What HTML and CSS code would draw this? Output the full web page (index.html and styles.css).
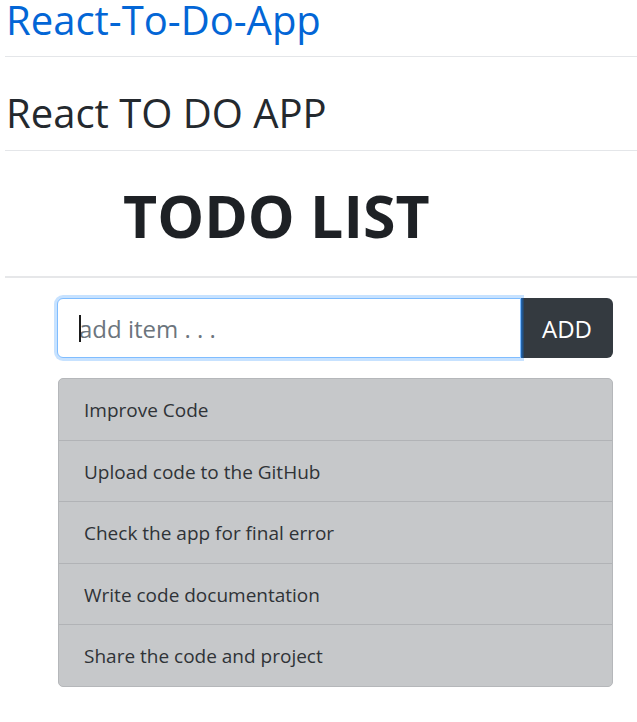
FILE: index.html
```html
<!DOCTYPE html>
<html lang="en">
<head>
<meta charset="utf-8">
<title>React-To-Do-App</title>
<link rel="stylesheet" href="styles.css">
</head>
<body>
<div class="page">
  <h1 class="heading"><a class="heading-link" href="#">React-To-Do-App</a></h1>
  <h1 class="heading heading-sub">React TO DO APP</h1>
  <div class="todo">
    <h1 class="todo-title">TODO LIST</h1>
    <div class="todo-panel">
      <div class="input-group">
        <span class="input-wrap">
          <input class="input" type="text" placeholder="add item . . .">
          <span class="caret"></span>
        </span>
        <button class="btn-add" type="button">ADD</button>
      </div>
      <ul class="list">
        <li class="list-item">Improve Code</li>
        <li class="list-item">Upload code to the GitHub</li>
        <li class="list-item">Check the app for final error</li>
        <li class="list-item">Write code documentation</li>
        <li class="list-item">Share the code and project</li>
      </ul>
    </div>
  </div>
</div>
</body>
</html>
```
FILE: styles.css
```css
html, body {
  margin: 0;
  padding: 0;
  background: #ffffff;
}
body {
  font-family: "Open Sans", "Noto Sans", "Liberation Sans", sans-serif;
  color: #24292e;
}
.page {
  padding-left: 5px;
}
.heading {
  margin: 0;
  font-size: 40px;
  font-weight: 500;
  line-height: 40px;
  padding-bottom: 16px;
  border-bottom: 1px solid #e4e6e9;
  padding-left: 1px;
  letter-spacing: 0;
}
.heading-sub {
  margin-top: 36px;
  padding-bottom: 17px;
  color: #24292e;
}
.heading-link {
  color: #0366d6;
  text-decoration: none;
}
.todo-title {
  margin: 34px 0 0 0;
  padding: 0 0 31px 118px;
  font-size: 59px;
  font-weight: 700;
  line-height: 60px;
  letter-spacing: 0;
  color: #1e2125;
  border-bottom: 2px solid #e6e7e9;
}
.todo-panel {
  width: 556px;
  margin: 20px 0 0 52px;
}
.input-group {
  display: flex;
  height: 60px;
}
.input-wrap {
  position: relative;
  flex: 1;
  display: flex;
}
.input {
  flex: 1;
  min-width: 0;
  height: 60px;
  box-sizing: border-box;
  padding: 0 21px;
  font-family: inherit;
  font-size: 24px;
  color: #495057;
  background: #ffffff;
  border: 1.5px solid #80bdff;
  border-radius: 6px 0 0 6px;
  box-shadow: 0 0 0 3px rgba(0, 123, 255, 0.22);
  outline: none;
}
.input::placeholder {
  color: #6c757d;
}
.caret {
  position: absolute;
  left: 22px;
  top: 17px;
  width: 1.5px;
  height: 27px;
  background: #1b1b1b;
}
.btn-add {
  width: 92px;
  height: 60px;
  border: none;
  border-radius: 0 6px 6px 0;
  background: #343a40;
  color: #ffffff;
  font-family: inherit;
  font-size: 24px;
  padding: 0;
  box-shadow: inset 1.5px 0 0 #2b5d95;
}
.list {
  list-style: none;
  margin: 20px 0 0 1px;
  padding: 0;
  background: #c6c8ca;
  border: 1px solid #b5b7ba;
  border-radius: 5px;
  overflow: hidden;
}
.list-item {
  height: 60.5px;
  box-sizing: border-box;
  padding: 3px 25px 0;
  line-height: 57.5px;
  font-size: 19px;
  color: #2f3337;
}
.list-item + .list-item {
  height: 61.5px;
  border-top: 1px solid #b1b3b6;
}
```
